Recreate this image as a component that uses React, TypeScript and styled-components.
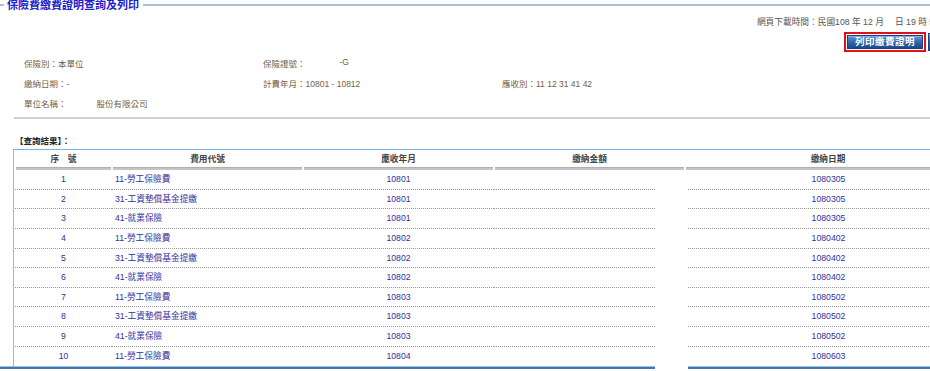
import React from "react";
import styled, {createGlobalStyle} from "styled-components";

const FONT = `"Liberation Sans", "Noto Sans CJK TC", sans-serif`;

const GlobalStyle = createGlobalStyle`
    html, body {
        margin: 0;
        padding: 0;
        background: #ffffff;
        overflow: hidden;
    }
    body {
        font-family: ${FONT};
    }
`;

const Page = styled.div`
    width: 1000px;
    display: flex;
    flex-direction: column;
`;

const LegendRow = styled.div`
    display: flex;
    align-items: center;
    height: 10px;
`;

const LegendLine = styled.div<{ $grow?: boolean }>`
    height: 2px;
    background: #a9bfd3;
    width: ${p => (p.$grow ? "auto" : "4px")};
    flex: ${p => (p.$grow ? 1 : "none")};
`;

const Title = styled.div`
    font-size: 11px;
    line-height: 10px;
    font-weight: bold;
    color: #2020cc;
    padding: 0 4px 0 3px;
    white-space: nowrap;
`;

const TimeRow = styled.div`
    display: flex;
    justify-content: flex-end;
    height: 14px;
    margin-top: 5px;
    padding-right: 50px;
    font-size: 8.7px;
    line-height: 14px;
    color: #555555;
    white-space: pre;
`;

const ButtonRow = styled.div`
    display: flex;
    justify-content: flex-end;
    align-items: center;
    gap: 2px;
    height: 20px;
    margin-top: 3px;
    padding-right: 2px;
`;

const Highlight = styled.div`
    border: 2px solid #e3101c;
    padding: 1px;
    display: flex;
`;

const BlueButton = styled.button<{ $w: number }>`
    width: ${p => p.$w}px;
    height: ${p => (p.$w > 72 ? 14 : 18)}px;
    padding: 0;
    border: 1px solid #1c4177;
    background: linear-gradient(#9dbbe6 0%, #5a8ccd 12%, #2f63a8 55%, #1b4a8c 100%);
    color: #ffffff;
    font-family: ${FONT};
    font-size: 9.5px;
    font-weight: bold;
    line-height: 12px;
    letter-spacing: 0.5px;
`;

const InfoGrid = styled.div`
    display: grid;
    grid-template-columns: 239px 239px 239px;
    grid-auto-rows: 20px;
    margin-top: 1px;
    padding-left: 24px;
    font-size: 8.5px;
    color: #6f5f46;
    align-items: center;
`;

const InfoItem = styled.div`
    display: flex;
    white-space: nowrap;
`;

const InfoValue = styled.span<{ $indent?: number }>`
    padding-left: ${p => p.$indent || 0}px;
`;

const Separator = styled.div`
    height: 2px;
    margin: 4px 0 0 14px;
    background: #cfcfcf;
`;

const ResultLabel = styled.div`
    margin: 15px 0 0 15px;
    height: 15px;
    font-size: 8.5px;
    line-height: 14px;
    font-weight: bold;
    color: #222222;
`;

const Table = styled.div`
    margin-left: 13px;
    width: 958px;
    border-left: 1px solid #8cbbe3;
    border-top: 1px solid #7db1e0;
`;

const HeadRow = styled.div`
    display: grid;
    grid-template-columns: 95px 189px 189px 189px 284px;
    column-gap: 2px;
    padding-left: 2px;
`;

const HeadCell = styled.div`
    height: 18px;
    line-height: 19px;
    text-align: center;
    font-size: 8.7px;
    font-weight: bold;
    color: #444444;
    border-bottom: 2px solid #c4c4c4;
    box-shadow: inset 0 -1px 0 #b0b0b0;
    white-space: pre;
`;

const DataRow = styled.div`
    display: grid;
    grid-template-columns: 97px 191px 191px 191px 284px;
    padding-left: 1px;
    height: 19.63px;
`;

const Cell = styled.div<{ $align?: "left" | "center"; $last?: boolean; $gapL?: number; $gapR?: number }>`
    box-sizing: border-box;
    height: 19.63px;
    line-height: 19px;
    text-align: ${p => p.$align || "center"};
    padding-left: ${p => (p.$align === "left" ? 3 : 0)}px;
    margin-left: ${p => p.$gapL || 0}px;
    margin-right: ${p => p.$gapR || 0}px;
    font-size: 8.7px;
    color: #32329c;
    border-bottom: ${p => (p.$last ? "none" : "1px dotted #9a9a9a")};
    white-space: nowrap;
`;

const FooterLine = styled.div`
    display: flex;
    gap: 33px;
`;

const FooterSegment = styled.div<{ $w?: number }>`
    height: 2px;
    border-top: 1px solid #9cbde2;
    background: #3f78b8;
    width: ${p => (p.$w ? `${p.$w}px` : "auto")};
    flex: ${p => (p.$w ? "none" : 1)};
`;

const rows = [
    ["1", "11-勞工保險費", "10801", "1080305"],
    ["2", "31-工資墊償基金提繳", "10801", "1080305"],
    ["3", "41-就業保險", "10801", "1080305"],
    ["4", "11-勞工保險費", "10802", "1080402"],
    ["5", "31-工資墊償基金提繳", "10802", "1080402"],
    ["6", "41-就業保險", "10802", "1080402"],
    ["7", "11-勞工保險費", "10803", "1080502"],
    ["8", "31-工資墊償基金提繳", "10803", "1080502"],
    ["9", "41-就業保險", "10803", "1080502"],
    ["10", "11-勞工保險費", "10804", "1080603"],
];

export default function App() {
    return (
        <Page>
            <GlobalStyle/>
            <LegendRow>
                <LegendLine/>
                <Title>保險費繳費證明查詢及列印</Title>
                <LegendLine $grow/>
            </LegendRow>
            <TimeRow>網頁下載時間：民國108 年 12 月　 日 19 時 52 分</TimeRow>
            <ButtonRow>
                <Highlight>
                    <BlueButton $w={76}>列印繳費證明</BlueButton>
                </Highlight>
                <BlueButton $w={70}>回上頁</BlueButton>
            </ButtonRow>
            <InfoGrid>
                <InfoItem>保險別：本單位</InfoItem>
                <InfoItem>保險證號：<InfoValue $indent={34}>-G</InfoValue></InfoItem>
                <InfoItem/>
                <InfoItem>繳納日期：-</InfoItem>
                <InfoItem>計費年月：10801 - 10812</InfoItem>
                <InfoItem>應收別：11 12 31 41 42</InfoItem>
                <InfoItem>單位名稱：<InfoValue $indent={30}>股份有限公司</InfoValue></InfoItem>
            </InfoGrid>
            <Separator/>
            <ResultLabel>【查詢結果】：</ResultLabel>
            <Table>
                <HeadRow>
                    <HeadCell>序　號</HeadCell>
                    <HeadCell>費用代號</HeadCell>
                    <HeadCell>應收年月</HeadCell>
                    <HeadCell>繳納金額</HeadCell>
                    <HeadCell>繳納日期</HeadCell>
                </HeadRow>
                {rows.map((r, i) => {
                    const last = i === rows.length - 1;
                    return (
                        <DataRow key={r[0]}>
                            <Cell $last={last}>{r[0]}</Cell>
                            <Cell $last={last} $align="left">{r[1]}</Cell>
                            <Cell $last={last}>{r[2]}</Cell>
                            <Cell $last={last} $gapR={30}/>
                            <Cell $last={last} $gapL={3}>{r[3]}</Cell>
                        </DataRow>
                    );
                })}
            </Table>
            <FooterLine>
                <FooterSegment $w={655}/>
                <FooterSegment/>
            </FooterLine>
        </Page>
    );
}
